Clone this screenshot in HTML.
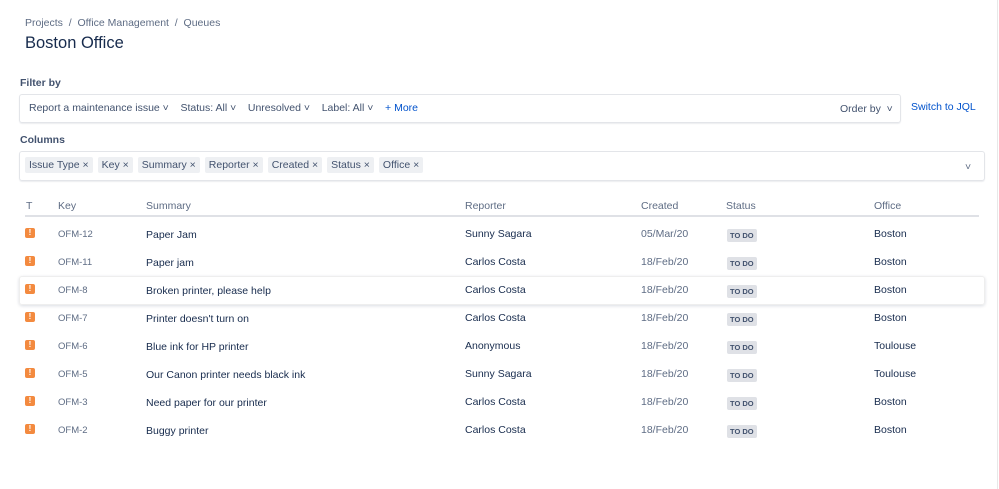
<!DOCTYPE html><html><head><style>
body{margin:0;width:999px;height:489px;background:#fff;font-family:"Liberation Sans",sans-serif;color:#172b4d;position:relative;overflow:hidden;font-size:10.5px}
.a{position:absolute;white-space:nowrap}
.g{color:#5e6c84}
.box{position:absolute;border:1px solid #e3e5e9;border-radius:3px;box-shadow:0 1px 1px rgba(9,30,66,.08)}
.chip{display:inline-block;background:#eef0f3;color:#42526e;padding:2px 4px;margin-right:5px;border-radius:2px}
.ic{position:absolute;left:25px;width:10px;height:10px;background:#f38a3f;border-radius:2px;color:#fff;font-size:8px;font-weight:bold;text-align:center;line-height:10px}
.td{position:absolute;left:727px;background:#dfe1e6;color:#42526e;font-size:7.5px;font-weight:bold;padding:2px 3px;border-radius:2px}
</style></head><body>
<div style="position:absolute;right:1px;top:0;width:1px;height:489px;background:#e8e8e8"></div>
<div class="a g" style="left:25px;top:17px;font-size:10.5px">Projects &nbsp;/&nbsp; Office Management &nbsp;/&nbsp; Queues</div>
<div class="a" style="left:25px;top:34px;font-size:16.5px">Boston Office</div>
<div class="a" style="left:20px;top:77px;font-weight:bold;color:#42526e">Filter by</div>
<div class="box" style="left:19px;top:94px;width:880px;height:27px"></div>
<div class="a" style="left:29px;top:102px;color:#42526e">Report a maintenance issue ˅ &nbsp;&nbsp; Status: All ˅ &nbsp;&nbsp; Unresolved ˅ &nbsp;&nbsp; Label: All ˅ &nbsp;&nbsp; <span style="color:#0052cc">+ More</span></div>
<div class="a" style="left:840px;top:103px;color:#42526e">Order by &nbsp;˅</div>
<div class="a" style="left:911px;top:101px;color:#0052cc">Switch to JQL</div>
<div class="a" style="left:20px;top:134px;font-weight:bold;color:#42526e">Columns</div>
<div class="box" style="left:19px;top:151px;width:964px;height:28px"></div>
<div class="a" style="left:25px;top:157px"><span class="chip">Issue Type ×</span><span class="chip">Key ×</span><span class="chip">Summary ×</span><span class="chip">Reporter ×</span><span class="chip">Created ×</span><span class="chip">Status ×</span><span class="chip">Office ×</span></div>
<div class="a g" style="left:965px;top:161px">˅</div>
<div class="a g" style="left:26px;top:200px">T</div><div class="a g" style="left:58px;top:200px">Key</div><div class="a g" style="left:146px;top:200px">Summary</div><div class="a g" style="left:465px;top:200px">Reporter</div><div class="a g" style="left:641px;top:200px">Created</div><div class="a g" style="left:726px;top:200px">Status</div><div class="a g" style="left:874px;top:200px">Office</div>
<div style="position:absolute;left:25px;top:215px;width:954px;height:2px;background:#dfe1e6"></div>
<div class="box" style="left:19px;top:276px;width:964px;height:27px;border-color:#eee;box-shadow:0 1px 3px rgba(9,30,66,.15)"></div>
<div id="rows"></div>
<script>
var r=[["OFM-12","Paper Jam","Sunny Sagara","05/Mar/20","Boston"],["OFM-11","Paper jam","Carlos Costa","18/Feb/20","Boston"],["OFM-8","Broken printer, please help","Carlos Costa","18/Feb/20","Boston"],["OFM-7","Printer doesn't turn on","Carlos Costa","18/Feb/20","Boston"],["OFM-6","Blue ink for HP printer","Anonymous","18/Feb/20","Toulouse"],["OFM-5","Our Canon printer needs black ink","Sunny Sagara","18/Feb/20","Toulouse"],["OFM-3","Need paper for our printer","Carlos Costa","18/Feb/20","Boston"],["OFM-2","Buggy printer","Carlos Costa","18/Feb/20","Boston"]];
var h="";r.forEach(function(x,i){var y=228+i*28;
h+='<div class="ic" style="top:'+y+'px">!</div><div class="a g" style="left:58px;top:'+(y+1)+'px;font-size:9.5px">'+x[0]+'</div><div class="a" style="left:146px;top:'+(y+1)+'px">'+x[1]+'</div><div class="a" style="left:465px;top:'+y+'px">'+x[2]+'</div><div class="a g" style="left:641px;top:'+y+'px">'+x[3]+'</div><div class="td" style="top:'+(y+1)+'px">TO DO</div><div class="a" style="left:874px;top:'+y+'px">'+x[4]+'</div>';});
document.getElementById("rows").innerHTML=h;
</script>
</body></html>
